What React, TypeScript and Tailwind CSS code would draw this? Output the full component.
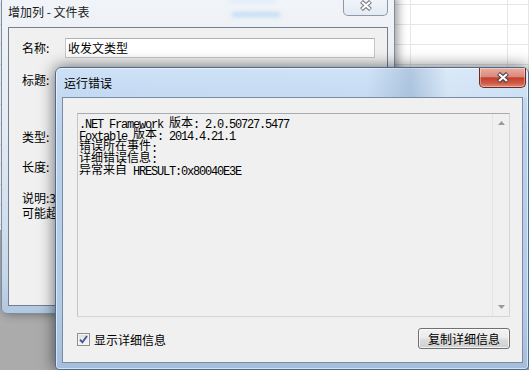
import type { ReactNode } from 'react'

const CJK = /([\u4e00-\u9fff]+)/

const ERROR_LINES = [
  '.NET Framework 版本: 2.0.50727.5477',
  'Foxtable 版本: 2014.4.21.1',
  '错误所在事件:',
  '详细错误信息:',
  '异常来自 HRESULT:0x80040E3E',
]

function MixedLine({ text }: { text: string }) {
  const parts = text.split(CJK).filter(Boolean)
  return (
    <div className="h-[11.75px] whitespace-pre">
      {parts.map((p, i) =>
        CJK.test(p) ? (
          <span
            key={i}
            className="relative -top-[1.5px] font-[family-name:'Noto_Sans_CJK_SC',sans-serif] text-[12px] tracking-normal"
          >
            {p}
          </span>
        ) : (
          <span key={i}>{p}</span>
        ),
      )}
    </div>
  )
}

function CloseGlyph({ fill, edge }: { fill: string; edge: string }) {
  return (
    <svg width="14" height="11" viewBox="0 0 14 11">
      <g strokeLinecap="butt">
        <path d="M2.5 1.5 L11.5 9.5 M11.5 1.5 L2.5 9.5" stroke={edge} strokeWidth="4.2" />
        <path d="M3 2 L11 9 M11 2 L3 9" stroke={fill} strokeWidth="2.2" />
      </g>
    </svg>
  )
}

function Arrow({ up }: { up?: boolean }) {
  return (
    <svg width="7" height="4" viewBox="0 0 7 4">
      <path d={up ? 'M0 4 L3.5 0 L7 4 Z' : 'M0 0 L7 0 L3.5 4 Z'} fill="#9a9a9a" />
    </svg>
  )
}

function FormRow({ label, children, className }: { label: string; children?: ReactNode; className?: string }) {
  return (
    <div className={`flex h-[20px] items-center ${className ?? ''}`}>
      <span className="w-[43px]">{label}</span>
      {children}
    </div>
  )
}

function BackWindow() {
  return (
    <div className="absolute left-[1px] top-[-5px] flex h-[319px] w-[394px] flex-col rounded-[6px] border border-[#7d8ea4] bg-[linear-gradient(to_bottom,#f1f4f8,#e2eaf3_45%,#c6d7ea_88%,#b1c7e0)] shadow-[3px_0_10px_rgba(0,0,0,0.4)]">
      {/* glass blur of what lies behind */}
      <div className="absolute left-[228px] top-[3px] h-[3px] w-[45px] bg-[#c4e0f7] opacity-60 blur-[2px]" />
      <div className="absolute left-[230px] top-[16px] h-[5px] w-[48px] bg-[#a6cff2] opacity-60 blur-[2px]" />

      <div className="relative flex h-[31px] shrink-0 items-center pl-[6px] text-[#1a1a1a]">
        增加列 - 文件表
        <div className="absolute right-[6px] top-0 flex h-[20px] w-[45px] items-center justify-center rounded-b-[5px] border border-t-0 border-[#8d99a8] bg-[linear-gradient(to_bottom,#f3f6fa,#e4ebf3)]">
          <CloseGlyph fill="#ffffff" edge="#75787c" />
        </div>
      </div>

      <div className="mx-[6px] mb-[7px] flex-1 border border-[#727f8f] bg-[#f0f0f0] pl-[13px]">
        <FormRow label="名称:" className="mt-[10px]">
          <div className="flex h-[20px] w-[310px] items-center border border-[#c4c8ce] border-t-[#aeb2b8] bg-white pl-[2px]">
            收发文类型
          </div>
        </FormRow>
        <FormRow label="标题:" className="mt-[12px]">
          <div className="h-[20px] w-[310px] border border-[#c4c8ce] bg-white" />
        </FormRow>
        <FormRow label="类型:" className="mt-[37px]" />
        <FormRow label="长度:" className="mt-[10px]" />
        <div className="mt-[13px] leading-[15px]">
          <div>说明:30个字符</div>
          <div>可能超出长度</div>
        </div>
      </div>
    </div>
  )
}

function ErrorWindow() {
  return (
    <div className="absolute left-[55px] top-[67px] flex h-[303px] w-[474px] flex-col rounded-t-[6px] rounded-b-[4px] border border-[#4d6a8f] bg-[linear-gradient(to_bottom,#cde1f6,#b9d2ee_20%,#b1cae7_80%,#a4bedc)] shadow-[inset_0_0_0_1px_rgba(255,255,255,0.55),0_0_16px_rgba(0,0,0,0.6)]">
      <div className="relative flex h-[29px] shrink-0 items-center bg-[linear-gradient(to_right,rgba(255,255,255,0)_0%,rgba(255,255,255,0.05)_66%,rgba(40,70,110,0.16)_75%,rgba(255,255,255,0.28)_83%,rgba(255,255,255,0.15)_100%)] pl-[8px]">
        运行错误
        <div className="absolute right-[2px] top-0 flex h-[20px] w-[47px] items-center justify-center rounded-b-[5px] border border-t-0 border-[#6b2a22] bg-[linear-gradient(to_bottom,#e9aea3,#d98a7b_45%,#c53f2b_52%,#cf5a47_80%,#e08b78)] shadow-[inset_0_0_0_1px_rgba(255,255,255,0.35)]">
          <CloseGlyph fill="#ffffff" edge="#3f3f3f" />
        </div>
      </div>

      <div className="mx-[6px] mr-[5px] mb-[6px] flex flex-1 flex-col border border-[#7b8ba0] bg-[#f0f0f0] pl-[14px] pr-[12px] pt-[15px]">
        <div className="flex h-[204px] border border-[#d2d5da] border-t-[#a7abb1] border-l-[#c3c6cb] bg-[#f0f0f0]">
          <div className="flex-1 pl-[1px] pt-[3px] font-[family-name:'Liberation_Mono',monospace] text-[12px] leading-[11.75px] tracking-[-1.2px] text-black">
            {ERROR_LINES.map((line) => (
              <MixedLine key={line} text={line} />
            ))}
          </div>
          <div className="flex w-[17px] flex-col items-center justify-between border-l border-[#e4e4e4] py-[7px]">
            <Arrow up />
            <Arrow />
          </div>
        </div>

        <div className="mt-[11px] flex h-[21px] items-center justify-between">
          <label className="flex items-center gap-[4px] pt-[2px]">
            <span className="flex h-[13px] w-[13px] items-center justify-center border border-[#8e8f8f] bg-[linear-gradient(to_bottom,#dedede,#f6f6f6)] shadow-[inset_0_0_0_1px_#f4f4f4]">
              <svg width="9" height="9" viewBox="0 0 9 9">
                <path d="M1 4.6 L3.4 7.4 L8 1" fill="none" stroke="#3f5597" strokeWidth="1.8" />
              </svg>
            </span>
            显示详细信息
          </label>
          <button
            type="button"
            className="flex h-[21px] w-[92px] items-center justify-center rounded-[3px] border border-[#707070] bg-[linear-gradient(to_bottom,#f2f2f2,#ebebeb_48%,#dddddd_52%,#cfcfcf)] shadow-[inset_0_0_0_1px_rgba(255,255,255,0.7)]"
          >
            复制详细信息
          </button>
        </div>
      </div>
    </div>
  )
}

export default function App() {
  return (
    <div className="relative h-[370px] w-[529px] overflow-hidden bg-[#ababab] font-[family-name:'Noto_Sans_CJK_SC','Noto_Sans',sans-serif] text-[12px] leading-[14px] text-black">
      {/* spreadsheet behind the dialogs */}
      <div className="absolute left-0 top-0 h-[230px] w-full overflow-hidden bg-white">
        <div className="-mt-[15px] grid grid-cols-[411px_97px_1fr]">
          {Array.from({ length: 36 }).map((_, i) => (
            <div key={i} className="h-[20px] border-b border-r border-[#e6e6e6]" />
          ))}
        </div>
      </div>

      <BackWindow />
      <ErrorWindow />
    </div>
  )
}
